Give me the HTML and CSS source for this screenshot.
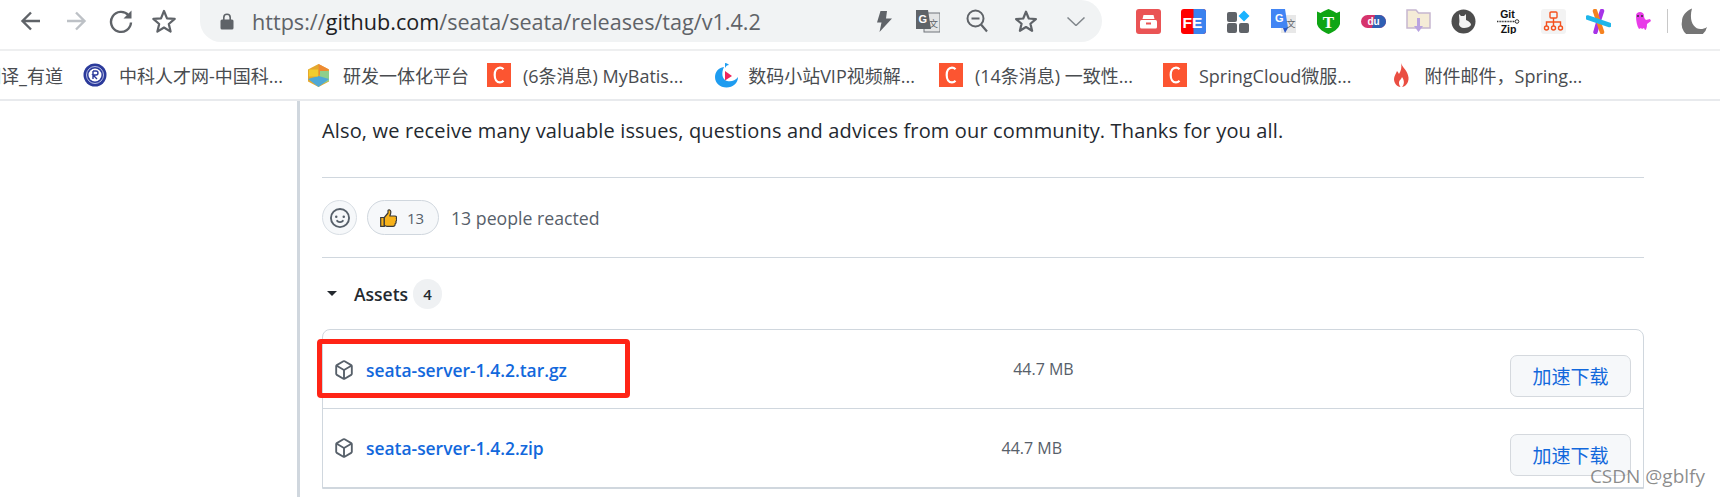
FILE: index.html
```html
<!DOCTYPE html>
<html lang="zh-CN">
<head>
    <meta charset="UTF-8">
    <title>Release v1.4.2 · seata/seata</title>
    <link rel="stylesheet" href="styles.css">
</head>
<body>
    <svg class="defs" width="0" height="0">
        <symbol id="csdn" viewBox="0 0 24 24">
            <rect width="24" height="24" fill="#fc5531"/>
            <path d="M16.5 6.2C15.4 5 14.2 4.6 13 4.6c-3.4 0-5.300 3.200-5.300 7.400s1.900 7.400 5.300 7.400c1.200 0 2.400-.4 3.500-1.600" fill="none" stroke="#fff" stroke-width="2.200"/>
        </symbol>
        <symbol id="package" viewBox="0 0 16 16">
            <path fill="#57606a" d="m8.878.392 5.25 3.045c.54.314.872.89.872 1.514v6.098a1.75 1.75 0 0 1-.872 1.514l-5.25 3.045a1.75 1.75 0 0 1-1.756 0l-5.25-3.045A1.75 1.75 0 0 1 1 11.049V4.951c0-.624.332-1.201.872-1.514L7.122.392a1.75 1.75 0 0 1 1.756 0ZM7.875 1.69l-4.63 2.685L8 7.133l4.755-2.758-4.63-2.685a.248.248 0 0 0-.25 0ZM2.500 5.677v5.372c0 .09.047.171.125.216l4.625 2.683V8.432Zm6.250 8.271 4.625-2.683a.25.25 0 0 0 .125-.216V5.677L8.750 8.432Z"/>
        </symbol>
    </svg>

    <header class="toolbar">
        <nav class="nav-btns">
            <svg class="nav-icon" width="24" height="24" viewBox="0 0 24 24"><path d="M21 12H4M12 3.500 3.500 12l8.500 8.500" fill="none" stroke="#5f6368" stroke-width="2.400"/></svg>
            <svg class="nav-icon fwd" width="24" height="24" viewBox="0 0 24 24"><path d="M3 12h17M12 3.500l8.500 8.500-8.500 8.500" fill="none" stroke="#bdc1c6" stroke-width="2.400"/></svg>
            <svg class="nav-icon reload" width="26" height="26" viewBox="0 0 26 26"><path d="M20.500 7.200A10 10 0 1 0 23 14.500" fill="none" stroke="#5f6368" stroke-width="2.400"/><path d="M23.500 2.500v8h-8z" fill="#5f6368"/></svg>
            <svg class="nav-icon star" width="26" height="26" viewBox="0 0 26 26"><path d="m13 3 3 7.300 7.700.6-5.900 5.100 1.800 7.600L13 19.500l-6.600 4.100 1.800-7.600-5.900-5.100 7.700-.6z" fill="none" stroke="#5f6368" stroke-width="2.200" stroke-linejoin="round"/></svg>
        </nav>

        <div class="omnibox">
            <svg class="lock" width="14" height="17" viewBox="0 0 14 17"><path d="M2 6.500h10a1.500 1.500 0 0 1 1.500 1.500v7a1.500 1.500 0 0 1-1.500 1.500H2A1.500 1.500 0 0 1 .5 15V8A1.500 1.500 0 0 1 2 6.500z" fill="#5f6368"/><path d="M3.800 7V4.500a3.200 3.200 0 0 1 6.400 0V7" fill="none" stroke="#5f6368" stroke-width="1.600"/></svg>
            <span class="url"><span class="url-dim">https://</span>github.com<span class="url-dim">/seata/seata/releases/tag/v1.4.2</span></span>
            <div class="omni-actions">
                <svg class="bolt" width="15" height="21" viewBox="0 0 15 21"><path d="M10 0H3.500L0 11.500h4.500L2.500 21 15 7.500H9z" fill="#5f6368"/></svg>
                <svg class="translate" width="24" height="23" viewBox="0 0 24 23"><rect x="8" y="3" width="16" height="19" fill="#e4e5e6" stroke="#70757a"/><path d="M0 0h12l3 19H0z" fill="#5f6368"/><text x="2.500" y="13" class="svg-g">G</text><text x="13" y="17" class="svg-wen">文</text></svg>
                <svg class="zoom-out" width="22" height="24" viewBox="0 0 22 24"><circle cx="9.500" cy="9.500" r="8" fill="none" stroke="#5f6368" stroke-width="2"/><path d="M5.500 9.500h8M15 15.500l6 7" stroke="#5f6368" stroke-width="2.200" fill="none"/></svg>
                <svg class="omni-star" width="24" height="24" viewBox="0 0 26 26"><path d="m13 3 3 7.300 7.700.6-5.900 5.100 1.800 7.600L13 19.500l-6.600 4.100 1.800-7.600-5.900-5.100 7.700-.6z" fill="none" stroke="#5f6368" stroke-width="2.400" stroke-linejoin="round"/></svg>
                <svg class="chevron" width="18" height="9" viewBox="0 0 18 9"><path d="m.5.500 8.500 8 8.500-8" fill="none" stroke="#80868b" stroke-width="1.500"/></svg>
            </div>
        </div>

        <div class="extensions">
            <svg class="ext" width="25" height="25" viewBox="0 0 25 25"><rect width="25" height="25" rx="3" fill="#ea5455"/><path d="M7.500 6h10l1 4h-12z" fill="#fff"/><rect x="4" y="11" width="17" height="8.500" rx="1.500" fill="#fff"/><rect x="10" y="13.500" width="5" height="2" fill="#ea5455"/></svg>
            <svg class="ext" width="25" height="25" viewBox="0 0 25 25"><rect width="25" height="25" rx="3" fill="#f00"/><path d="M12.500 0H22a3 3 0 0 1 3 3v19a3 3 0 0 1-3 3h-9.500z" fill="#3b82ee"/><text x="1.500" y="18.500" class="svg-fe">FE</text></svg>
            <svg class="ext" width="25" height="25" viewBox="0 0 25 25"><rect x="1" y="3" width="10" height="10" rx="2" fill="#5f6368"/><rect x="1" y="14" width="10" height="10" rx="2" fill="#5f6368"/><rect x="13" y="14" width="10" height="10" rx="2" fill="#5f6368"/><path d="m18 1.500 5.500 5.500-5.500 5.500L12.500 7z" fill="#1ab3ff"/></svg>
            <svg class="ext" width="25" height="25" viewBox="0 0 25 25"><rect x="10" y="6" width="15" height="18" fill="#e8e8e8"/><path d="M0 0h14l3 19H0z" fill="#4285f4"/><path d="m17 19-3 5-2-5z" fill="#2a56c6"/><text x="4" y="13" class="svg-gt">G</text><text x="15.500" y="18" class="svg-wen">文</text></svg>
            <svg class="ext" width="25" height="25" viewBox="0 0 25 25"><path d="m1 2.500 3.500 1.500L8 2l4.500-2L17 2l3.500 2L24 2.500V15c-1.500 5-6.500 8-11.500 10C7.500 23 2.500 20 1 15z" fill="#0fa514"/><text x="12.500" y="19" class="svg-t">T</text></svg>
            <svg class="ext" width="25" height="25" viewBox="0 0 25 25"><rect y="6" width="25" height="13" rx="6.500" fill="#d6336c"/><path d="M14 6h4.500a6.500 6.500 0 0 1 0 13H11z" fill="#2f5fb3"/><text x="12.500" y="16" class="svg-du">du</text></svg>
            <svg class="ext" width="25" height="25" viewBox="0 0 25 25"><path d="M1 1h9l2.500 3H24v15H1z" fill="#f5ecd7" stroke="#c6b6d0" stroke-width="1.500"/><path d="M11 9h3v8h3l-4.500 6L8 17h3z" fill="#b9a3e0"/></svg>
            <svg class="ext" width="25" height="25" viewBox="0 0 25 25"><circle cx="12.500" cy="12.500" r="12" fill="#4d4d4d"/><path d="M8 5l2 2h3l2-2v6c3 1 5 3 5 5-1 2-4 3-7 3-3 0-5-2-5-4 1-2 0-7 0-10z" fill="#f4f4f4"/></svg>
            <svg class="ext" width="25" height="25" viewBox="0 0 25 25"><text x="11.500" y="9" class="svg-git">Git</text><path d="M1 12.500h18" stroke="#333" stroke-width="1.500" stroke-dasharray="1 .6"/><circle cx="21" cy="12.500" r="1.800" fill="none" stroke="#333"/><text x="12.500" y="24" class="svg-git">Zip</text></svg>
            <svg class="ext" width="25" height="25" viewBox="0 0 25 25"><rect width="25" height="25" rx="3" fill="#f3f3f3"/><rect x="9" y="3" width="7" height="6" rx="1" fill="none" stroke="#f4511e" stroke-width="1.400"/><path d="M12.500 9v4M5.500 17v-4h14v4M12.500 13v4" fill="none" stroke="#f4511e" stroke-width="1.400"/><circle cx="5.500" cy="19" r="2" fill="none" stroke="#f4511e" stroke-width="1.400"/><circle cx="12.500" cy="19" r="2" fill="none" stroke="#f4511e" stroke-width="1.400"/><circle cx="19.500" cy="19" r="2" fill="none" stroke="#f4511e" stroke-width="1.400"/></svg>
            <svg class="ext" width="25" height="25" viewBox="0 0 25 25"><path d="M16 2 12.500 12.500 9.500 23" stroke="#a633e8" stroke-width="4.500" fill="none" stroke-linecap="round"/><path d="M9 2l3.500 10.500L16 23" stroke="#f58220" stroke-width="4.500" fill="none" stroke-linecap="round"/><path d="M1.500 8.500 23.500 16" stroke="#1fb6ea" stroke-width="4.500" stroke-linecap="round"/></svg>
            <svg class="ext" width="25" height="25" viewBox="0 0 25 25"><path d="M5 7c0-3 2-4 4-4s4 1 4 4c0 2 1 3 2 4l4-1 1 2-4 3c0 4-1 6-2 6l-1-2-2 1-1-1-2 1c-2-3-3-8-3-13z" fill="#e83ce8"/><circle cx="7" cy="7" r="1" fill="#333"/><circle cx="11" cy="7" r="1" fill="#333"/></svg>
            <span class="ext-sep"></span>
            <svg class="moon" width="26" height="26" viewBox="0 0 26 26"><path d="M11 .5C5 3 1 7.500 1 13.500A12.500 12.500 0 0 0 26 19c-2 1.500-4 2-6.500 2C13 21 7.500 13 11 .5z" fill="#757575"/></svg>
        </div>
    </header>

    <div class="bookmarks">
        <a class="bm bm-first">翻译_有道</a>
        <a class="bm bm-cas"><svg width="24" height="24" viewBox="0 0 24 24"><circle cx="12" cy="12" r="11.500" fill="#2b3a9b"/><circle cx="12" cy="12" r="6.500" fill="#fff"/><circle cx="12" cy="12" r="8.500" fill="none" stroke="#b9c0e6"/><path d="M10 8v8M10 8h3a2 2 0 0 1 0 4h-3l4 4" fill="none" stroke="#2b3a9b" stroke-width="1.400"/></svg>中科人才网-中国科...</a>
        <a class="bm bm-dev"><svg width="25" height="25" viewBox="0 0 25 25"><path d="M12.500 1 23 6.500v12L12.500 24 2 18.500v-12z" fill="#e5a82e"/><path d="M12.500 1 23 6.500 13 12z" fill="#ee8a32"/><path d="M14 8h9v10l-9 4z" fill="#8fcf8b"/><path d="M2 16l10.500-3L23 16l-10.500 8z" fill="#4fa8d6"/><path d="M3 6.500h9v7H3z" fill="#f3cc2e"/></svg>研发一体化平台</a>
        <a class="bm bm-c1"><svg width="24" height="24"><use href="#csdn"/></svg>(6条消息) MyBatis...</a>
        <a class="bm bm-video"><svg width="23" height="26" viewBox="0 0 23 26"><path d="M9 5C3 6 0 10 0 15c0 6 5 10.500 11.500 10.500S23 21 23 15c-3 4-7 5-11 4-5-1.500-6-8-3-14z" fill="#1e9cf0"/><path d="M10 1c2 0 3 1 4 2-2 0-3 1-4 3z" fill="#1e9cf0"/><path d="m10 9 7 5-7 4.500z" fill="#f0245c"/></svg>数码小站VIP视频解...</a>
        <a class="bm bm-c2"><svg width="24" height="24"><use href="#csdn"/></svg>(14条消息) 一致性...</a>
        <a class="bm bm-c3"><svg width="24" height="24"><use href="#csdn"/></svg>SpringCloud微服...</a>
        <a class="bm bm-fire"><svg width="15" height="24" viewBox="0 0 15 24"><path d="M7 0c1 4 7 8 7.500 14.500C15 20 11 24 8 24c2-2 3-6 0-10-1 3-3 3-3 6 0 1 .5 3 1.500 4C3 24 0 20 0 16c0-3 2-5 3-8 1 1 1.500 2 2 3C7 8 8 4 7 0z" fill="#ea4e42"/></svg>附件邮件，Spring...</a>
    </div>

    <main class="page">
        <div class="release">
            <p class="note">Also, we receive many valuable issues, questions and advices from our community. Thanks for you all.</p>

            <div class="reactions">
                <span class="react-add">
                    <svg width="20" height="20" viewBox="0 0 16 16"><path fill="#57606a" d="M8 0a8 8 0 1 1 0 16A8 8 0 0 1 8 0ZM1.500 8a6.500 6.500 0 1 0 13 0 6.500 6.500 0 0 0-13 0Zm3.820 1.636a.75.75 0 0 1 1.038.175l.007.009c.103.118.22.222.35.31.264.178.683.37 1.285.37.602 0 1.020-.192 1.285-.371.13-.088.247-.192.35-.31l.007-.008a.75.75 0 0 1 1.222.87l-.022-.015c.02.013.021.015.021.015v.001l-.001.002-.002.003-.005.007-.014.019a2.066 2.066 0 0 1-.184.213c-.16.166-.338.316-.53.445-.63.418-1.370.638-2.127.629-.946 0-1.652-.308-2.126-.63a3.331 3.331 0 0 1-.715-.657l-.014-.02-.005-.006-.002-.003v-.002h-.001l.613-.432-.614.43a.75.75 0 0 1 .183-1.044ZM12 7a1 1 0 1 1-2 0 1 1 0 0 1 2 0ZM5 8a1 1 0 1 1 0-2 1 1 0 0 1 0 2Z"/></svg>
                </span>
                <span class="react-pill">
                    <svg width="17" height="18" viewBox="0 0 17 18"><path d="M.7 8.500h3.600v8.800H.7z" fill="#f7b21a" stroke="#3a3a3a" stroke-width="1.200"/><path d="M4.300 8.500 8 4V1.500c0-1 2.500-1.200 2.800 1 .2 1.500-.5 3-1 4.500h5c1.800 0 2.200 1.500 1.500 2.500.7 1 .5 2.200-.4 2.800.4 1 .1 2-.8 2.500.2 1.500-.7 2.500-2 2.500H7c-1.200 0-2-.5-2.700-1z" fill="#f7b21a" stroke="#3a3a3a" stroke-width="1.200" stroke-linejoin="round"/></svg>
                    <span class="react-count">13</span>
                </span>
                <span class="react-text">13 people reacted</span>
            </div>

            <div class="assets-head">
                <span class="caret"></span>
                <span class="assets-title">Assets</span>
                <span class="counter">4</span>
            </div>

            <div class="asset-box">
                <div class="asset-row">
                    <a class="asset-name"><svg width="20" height="20"><use href="#package"/></svg>seata-server-1.4.2.tar.gz</a>
                    <span class="asset-size">44.7 MB</span>
                    <button class="speed-btn">加速下载</button>
                </div>
                <div class="asset-row">
                    <a class="asset-name"><svg width="20" height="20"><use href="#package"/></svg>seata-server-1.4.2.zip</a>
                    <span class="asset-size">44.7 MB</span>
                    <button class="speed-btn">加速下载</button>
                </div>
            </div>
        </div>
        <div class="mark"></div>
        <div class="watermark">CSDN @gblfy</div>
    </main>
</body>
</html>
```

FILE: styles.css
```css
* {
    box-sizing: border-box;
}
html, body {
    margin: 0;
    height: 497px;
    overflow: hidden;
    background: #fff;
    font-family: "Open Sans", "Noto Sans CJK SC", sans-serif;
}
svg {
    display: block;
    flex: none;
}
.defs {
    position: absolute;
}

/* browser toolbar */
.toolbar {
    display: flex;
    height: 51px;
    border-bottom: 2px solid #eeeff0;
}
.nav-btns {
    display: flex;
    flex: none;
    align-items: center;
    width: 200px;
    height: 42px;
    padding-left: 19px;
}
.nav-icon.fwd {
    margin-left: 21px;
}
.nav-icon.reload {
    margin-left: 20px;
}
.nav-icon.star {
    margin-left: 17px;
}
.omnibox {
    display: flex;
    flex: none;
    align-items: center;
    width: 902px;
    height: 42px;
    padding-left: 20px;
    background: #f1f3f4;
    border-radius: 0 21px 21px 21px;
}
.url {
    margin-left: 18px;
    font-size: 21.600px;
    color: #202124;
    white-space: nowrap;
}
.url-dim {
    color: #5f6368;
}
.omni-actions {
    display: flex;
    align-items: center;
    margin-left: auto;
    padding-right: 17px;
}
.translate {
    margin-left: 24px;
}
.zoom-out {
    margin-left: 26px;
}
.omni-star {
    margin-left: 26px;
}
.chevron {
    margin-left: 29px;
}
.svg-g, .svg-gt {
    font: bold 11px "Liberation Sans", sans-serif;
    fill: #fff;
}
.svg-wen {
    font: 9px "Noto Sans CJK SC", sans-serif;
    fill: #5f6368;
}
.extensions {
    display: flex;
    flex: none;
    align-items: center;
    gap: 20px;
    height: 42px;
    padding-left: 34px;
}
.svg-fe {
    font: bold 15.500px "Liberation Sans", sans-serif;
    fill: #fff;
}
.svg-t {
    font: bold 17px "Liberation Serif", serif;
    fill: #fff;
    text-anchor: middle;
}
.svg-du {
    font: bold 10px "Liberation Sans", sans-serif;
    fill: #fff;
    text-anchor: middle;
}
.svg-git {
    font: bold 10.500px "Liberation Sans", sans-serif;
    fill: #111;
    text-anchor: middle;
}
.ext-sep {
    width: 1px;
    height: 24px;
    margin-left: -9px;
    background: #c8c8c8;
}
.moon {
    margin-left: -7px;
}

/* bookmarks bar */
.bookmarks {
    display: flex;
    align-items: center;
    height: 50px;
    border-bottom: 2px solid #e8eaed;
    font-size: 18px;
    color: #494c50;
    white-space: nowrap;
    overflow: hidden;
}
.bm {
    display: flex;
    flex: none;
    align-items: center;
    gap: 12px;
}
.bm-first {
    width: 100px;
    margin-left: -17px;
}
.bm-dev {
    margin-left: 23px;
}
.bm-c1 {
    margin-left: 18px;
}
.bm-video {
    margin-left: 32px;
    gap: 10px;
}
.bm-c2 {
    margin-left: 24px;
}
.bm-c3 {
    margin-left: 30px;
}
.bm-fire {
    margin-left: 42px;
    gap: 16px;
}

/* release page */
.page {
    position: relative;
    height: 396px;
    padding-left: 297px;
    overflow: hidden;
}
.release {
    height: 100%;
    padding: 0 76px 0 22px;
    border-left: 3px solid #d0d7de;
    color: #24292f;
}
.note {
    height: 77px;
    margin: 0;
    padding-top: 15px;
    border-bottom: 1px solid #d0d7de;
    font-size: 20px;
    line-height: 30px;
    letter-spacing: 0.15px;
    white-space: nowrap;
}
.reactions {
    display: flex;
    align-items: center;
    height: 80px;
    border-bottom: 1px solid #d0d7de;
}
.react-add {
    display: flex;
    align-items: center;
    justify-content: center;
    width: 35px;
    height: 35px;
    background: #f6f8fa;
    border: 1px solid #d8dee4;
    border-radius: 50%;
}
.react-pill {
    display: flex;
    align-items: center;
    width: 72px;
    height: 35px;
    margin-left: 10px;
    padding-left: 12px;
    background: #f6f8fa;
    border: 1px solid #d0d7de;
    border-radius: 18px;
}
.react-count {
    margin-left: 10px;
    font-size: 15px;
    color: #57606a;
}
.react-text {
    margin-left: 12px;
    font-size: 17.700px;
    color: #57606a;
}
.assets-head {
    display: flex;
    align-items: center;
    height: 71px;
    padding-left: 5px;
}
.caret {
    width: 0;
    height: 0;
    border-top: 5px solid #24292f;
    border-left: 5px solid transparent;
    border-right: 5px solid transparent;
}
.assets-title {
    margin-left: 17px;
    font-size: 17.500px;
    font-weight: 600;
}
.counter {
    display: flex;
    align-items: center;
    justify-content: center;
    width: 29px;
    height: 30px;
    margin-left: 5px;
    background: #eff1f3;
    border-radius: 15px;
    font-size: 15px;
    font-weight: 600;
}
.asset-box {
    border: 1px solid #d0d7de;
    border-radius: 8px 8px 0 0;
}
.asset-row {
    display: flex;
    align-items: center;
    justify-content: space-between;
    height: 79px;
    padding: 0 12px 0 11px;
    border-bottom: 1px solid #d0d7de;
}
.asset-row:first-child .asset-name {
    margin-top: 2px;
}
.asset-name {
    display: flex;
    align-items: center;
    gap: 12px;
    font-size: 17.400px;
    font-weight: 600;
    color: #1268dc;
}
.asset-size {
    margin-left: 10px;
    font-size: 16px;
    color: #57606a;
}
.speed-btn {
    width: 121px;
    height: 42px;
    margin-top: 13px;
    background: #f6f8fa;
    border: 1px solid #d5d9de;
    border-radius: 7px;
    font-family: inherit;
    font-size: 19px;
    color: #1268dc;
}

/* red box drawn over the screenshot */
.mark {
    position: absolute;
    left: 317px;
    top: 238px;
    width: 313px;
    height: 59px;
    border: 5px solid #ff2416;
    border-radius: 4px;
}
.watermark {
    position: absolute;
    right: 15px;
    bottom: 8px;
    font-size: 19px;
    color: rgba(90, 90, 90, 0.7);
}
```
